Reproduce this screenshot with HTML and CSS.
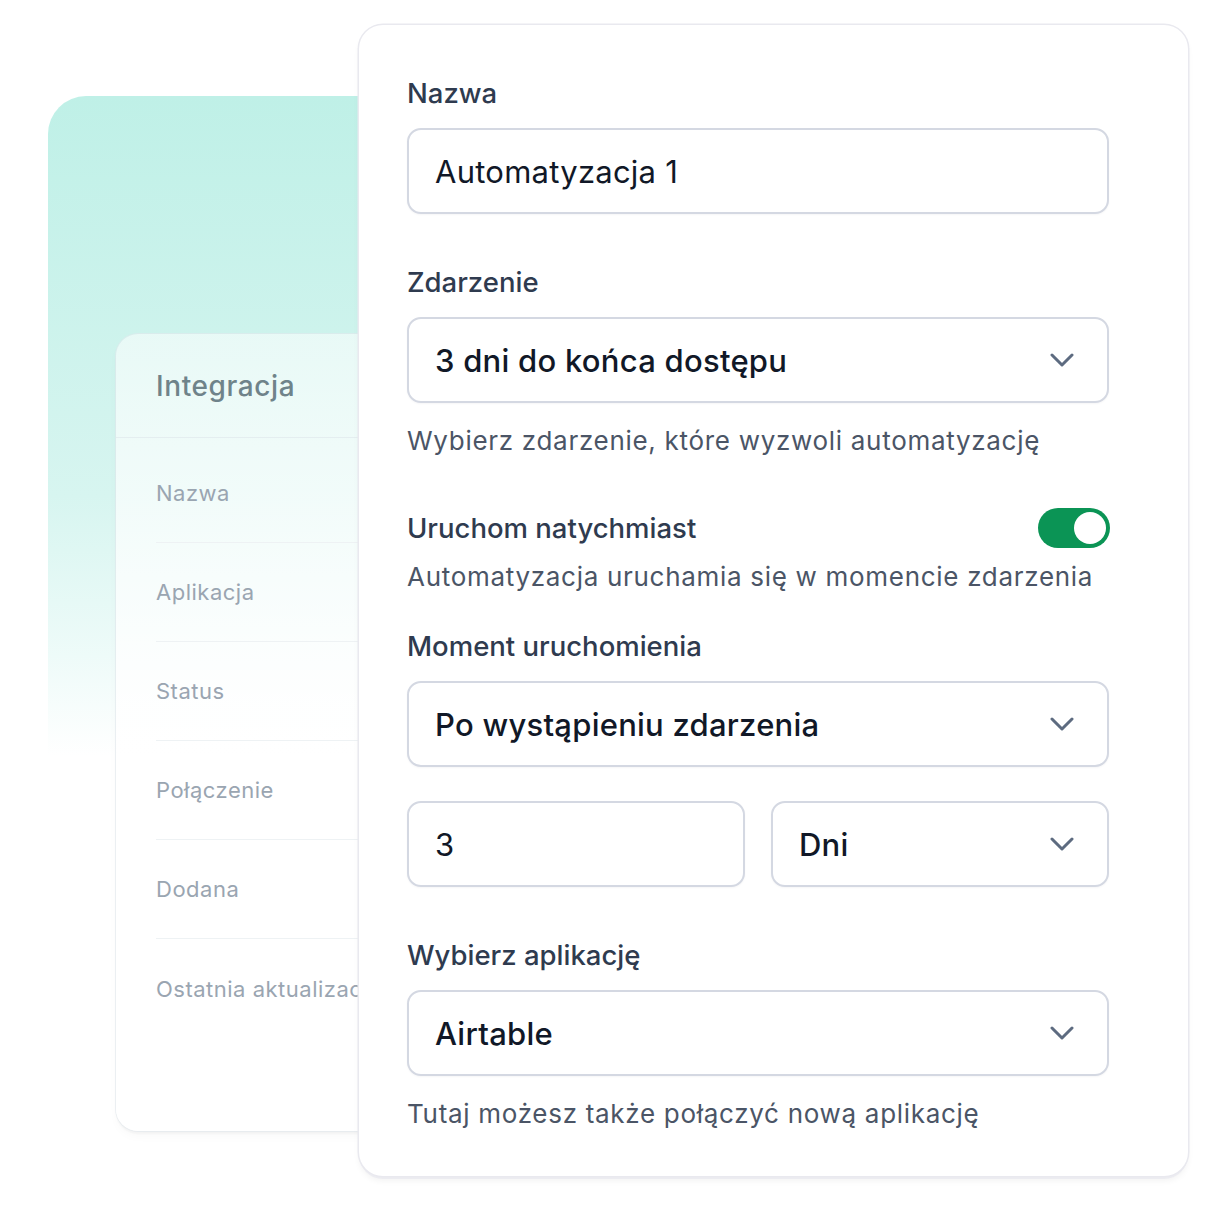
FILE: index.html
```html
<!DOCTYPE html>
<html lang="pl">
<head>
<meta charset="utf-8">
<title>Automatyzacja</title>
<link rel="stylesheet" href="styles.css">
</head>
<body>
<div class="stage">
  <div class="bg-card"></div>
  <div class="info-card">
    <div class="info-head">Integracja</div>
    <ul class="info-list">
      <li>Nazwa</li>
      <li>Aplikacja</li>
      <li>Status</li>
      <li>Połączenie</li>
      <li>Dodana</li>
      <li class="last">Ostatnia aktualizacja</li>
    </ul>
  </div>
  <form class="form-card">
    <div class="label">Nazwa</div>
    <div class="field"><span class="val">Automatyzacja 1</span></div>

    <div class="label gap-l">Zdarzenie</div>
    <div class="field select"><span class="val strong">3 dni do końca dostępu</span>
      <svg class="chev" viewBox="0 0 24 14" width="24" height="14"><path d="M2 2l10 10 10-10"/></svg>
    </div>
    <div class="help">Wybierz zdarzenie, które wyzwoli automatyzację</div>

    <div class="toggle-row gap-l">
      <div class="label">Uruchom natychmiast</div>
      <span class="toggle"><span class="knob"></span></span>
    </div>
    <div class="help tight">Automatyzacja uruchamia się w momencie zdarzenia</div>

    <div class="label gap-m">Moment uruchomienia</div>
    <div class="field select"><span class="val strong">Po wystąpieniu zdarzenia</span>
      <svg class="chev" viewBox="0 0 24 14" width="24" height="14"><path d="M2 2l10 10 10-10"/></svg>
    </div>
    <div class="pair">
      <div class="field"><span class="val">3</span></div>
      <div class="field select"><span class="val strong">Dni</span>
        <svg class="chev" viewBox="0 0 24 14" width="24" height="14"><path d="M2 2l10 10 10-10"/></svg>
      </div>
    </div>

    <div class="label gap-l">Wybierz aplikację</div>
    <div class="field select"><span class="val strong">Airtable</span>
      <svg class="chev" viewBox="0 0 24 14" width="24" height="14"><path d="M2 2l10 10 10-10"/></svg>
    </div>
    <div class="help">Tutaj możesz także połączyć nową aplikację</div>
  </form>
</div>
</body>
</html>
```

FILE: styles.css
```css
* { box-sizing: border-box; }
html, body { margin: 0; padding: 0; background: #ffffff; }
body { font-family: Inter, "Noto Sans", "Liberation Sans", sans-serif; }

.stage {
  display: grid;
  width: 1214px;
  height: 1214px;
  overflow: hidden;
}
.stage > * { grid-area: 1 / 1; }

.bg-card {
  margin: 96px 0 0 48px;
  width: 700px;
  height: 1000px;
  border-radius: 38px 38px 0 0;
  background: linear-gradient(180deg, #bff0e7 0%, #d7f5f0 40%, #eefbf9 56%, rgba(255,255,255,0) 66%);
}

.info-card {
  margin: 334px 0 0 116px;
  width: 600px;
  height: 797px;
  border-radius: 22px;
  background: linear-gradient(180deg, rgba(255,255,255,0.55) 0%, rgba(255,255,255,0.75) 35%, #ffffff 60%);
  box-shadow: 0 0 0 1px rgba(225,232,236,0.6), 0 3px 2px rgba(0,0,0,0.03), 0 6px 10px rgba(0,0,0,0.025);
}
.info-head {
  height: 104px;
  padding: 0 40px;
  display: flex;
  align-items: center;
  font-size: 28px;
  letter-spacing: 0.6px;
  font-weight: 500;
  color: #6f838a;
  border-bottom: 1.5px solid rgba(226,236,238,0.9);
}
.info-list {
  list-style: none;
  margin: 6px 0 0 0;
  padding: 0 0 0 40px;
}
.info-list li {
  height: 99px;
  display: flex;
  align-items: center;
  font-size: 22px;
  letter-spacing: 0.5px;
  color: #9aa5b1;
  border-bottom: 1.5px solid #eef2f4;
  white-space: nowrap;
}
.info-list li.last { border-bottom: none; }

.form-card {
  margin: 25px 0 0 359px;
  width: 829px;
  height: 1151px;
  align-self: start;
  justify-self: start;
  background: #ffffff;
  border-radius: 24px;
  padding: 50px 79px 0 48px;
  box-shadow: 0 0 0 1.5px #e9e9ef, 0 3px 0 #ececf1, 0 5px 6px rgba(0,0,0,0.05);
  display: flex;
  flex-direction: column;
}

.label {
  font-size: 27.5px;
  line-height: 36px;
  font-weight: 500;
  color: #2f3b4f;
  margin-bottom: 17px;
}
.gap-l { margin-top: 50px; }
.toggle-row.gap-l { margin-top: 49px; }
.gap-m { margin-top: 33px; }

.field {
  height: 86px;
  border: 2px solid #d4d8e2;
  border-radius: 14px;
  padding: 0 33px 0 26px;
  display: flex;
  align-items: center;
  justify-content: space-between;
  background: #fff;
  box-shadow: 0 1px 2px rgba(16,24,40,0.04);
}
.val {
  font-size: 31px;
  letter-spacing: 0.25px;
  color: #111827;
  font-weight: 400;
}
.val.strong { font-weight: 500; }
.chev {
  fill: none;
  stroke: #5d6b80;
  stroke-width: 3;
  stroke-linecap: round;
  stroke-linejoin: round;
}

.help {
  font-size: 26px;
  letter-spacing: 0.7px;
  line-height: 36px;
  color: #4b5566;
  margin-top: 20px;
}
.help.tight { margin-top: 11px; }

.toggle-row {
  display: flex;
  align-items: center;
  justify-content: space-between;
}
.toggle-row .label { margin-bottom: 0; }
.toggle {
  width: 72px;
  height: 40px;
  border-radius: 20px;
  background: #0b9455;
  padding: 4px;
  display: flex;
  justify-content: flex-end;
  margin-right: -1px;
}
.knob {
  width: 32px;
  height: 32px;
  border-radius: 50%;
  background: #ffffff;
}

.pair {
  margin-top: 34px;
  display: grid;
  grid-template-columns: 1fr 1fr;
  gap: 26px;
}
```
